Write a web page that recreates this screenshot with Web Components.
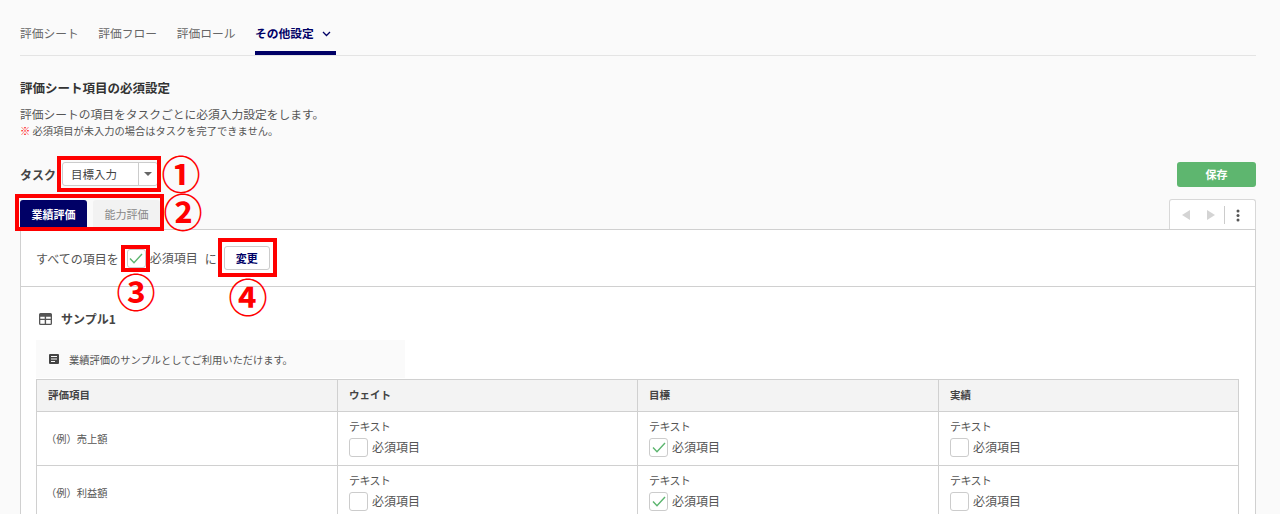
<!DOCTYPE html>
<html lang="ja">
<head>
<meta charset="utf-8">
<title>評価シート項目の必須設定</title>
<style>
  html, body { margin: 0; height: 514px; overflow: hidden; background: #fafafa; }
  body { font-family: "Noto Sans CJK JP", "Liberation Sans", sans-serif; color: #555; font-size: 12px; }
</style>
</head>
<body>
<settings-page></settings-page>

<script>
const CHECK_ICON = /*html*/`<svg width="14" height="11" viewBox="0 0 14 11"><path fill="none" stroke="#5cb56f" stroke-width="1.4" d="M1 5.500l4 4.300L13 1"></path></svg>`;

class TopNav extends HTMLElement {
    constructor() {
        super();
        const shadow = this.attachShadow({ mode: 'open' });
        shadow.innerHTML = /*html*/`
        <style>
            :host { display: flex; gap: 19.600px; height: 55px; margin: 0 24px 0 20px; border-bottom: 1px solid #e4e4e4; box-sizing: content-box; font-size: 11.750px; }
            a { display: block; padding-top: 24px; line-height: 18px; color: #666; }
            .active { color: #000066; font-weight: 700; border-bottom: 4px solid #000066; height: 27px; width: 81px; display: flex; align-items: flex-start; gap: 8px; }
            svg { margin-top: 7px; }
        </style>
        <a>評価シート</a>
        <a>評価フロー</a>
        <a>評価ロール</a>
        <a class="active">その他設定
            <svg width="9" height="6" viewBox="0 0 9 6"><path fill="none" stroke="#000066" stroke-width="1.3" d="M1 1l3.5 3.5L8 1"></path></svg>
        </a>`;
    }
}

class RequiredCheck extends HTMLElement {
    static get observedAttributes() { return ['checked']; }
    constructor() {
        super();
        const shadow = this.attachShadow({ mode: 'open' });
        shadow.innerHTML = /*html*/`
        <style>
            :host { display: inline-flex; align-items: center; gap: 4px; color: #555; line-height: 18px; }
            .box { width: 17px; height: 17px; border: 1px solid #ccc; border-radius: 3px; background: #fff; display: flex; align-items: center; justify-content: center; }
            .label { margin-top: var(--label-shift, 0); }
        </style>
        <span class="box"></span><span class="label"><slot>必須項目</slot></span>`;
    }
    attributeChangedCallback(name, oldValue, value) {
        this.shadowRoot.querySelector('.box').innerHTML = value === null ? '' : CHECK_ICON;
    }
}

class SheetCell extends HTMLElement {
    constructor() {
        super();
        const shadow = this.attachShadow({ mode: 'open' });
        shadow.innerHTML = /*html*/`
        <style>
            :host { display: flex; flex-direction: column; align-items: flex-start; gap: 4px; padding: 6px 11px 0; border-left: 1px solid #d0d0d0; --label-shift: -2px; }
            div { line-height: 16px; color: #555; font-size: 11px; letter-spacing: -0.6px; }
        </style>
        <div>テキスト</div>
        <required-check></required-check>`;
        if (this.hasAttribute('checked')) {
            shadow.querySelector('required-check').setAttribute('checked', '');
        }
    }
}

class SheetTable extends HTMLElement {
    constructor() {
        super();
        const shadow = this.attachShadow({ mode: 'open' });
        const row = (name) => /*html*/`
            <div class="row">
                <div class="name">（例）${name}</div>
                <sheet-cell></sheet-cell>
                <sheet-cell checked></sheet-cell>
                <sheet-cell></sheet-cell>
            </div>`;
        shadow.innerHTML = /*html*/`
        <style>
            :host { display: block; margin: 0 16px 0 15px; border: 1px solid #d0d0d0; border-width: 1px 1px 0 1px; }
            .row { display: grid; grid-template-columns: 300px 300px 301px 1fr; height: 53px; border-bottom: 1px solid #d0d0d0; background: #fff; }
            .head { height: 31px; background: #f3f3f3; font-size: 10.500px; font-weight: 700; color: #444; }
            .head div { padding: 0 11px; line-height: 30px; border-left: 1px solid #d0d0d0; }
            .head div:first-child { border-left: 0; }
            .name { font-size: 10.250px; padding: 0 0 0 9px; line-height: 53px; color: #555; }
        </style>
        <div class="row head">
            <div>評価項目</div><div>ウェイト</div><div>目標</div><div>実績</div>
        </div>
        ${row('売上額')}
        ${row('利益額')}`;
    }
}

class SheetPanel extends HTMLElement {
    constructor() {
        super();
        const shadow = this.attachShadow({ mode: 'open' });
        shadow.innerHTML = /*html*/`
        <style>
            :host { display: block; margin: 0 24px 0 20px; border: 1px solid #d0d0d0; background: #fff; height: 300px; overflow: hidden; }
            .bulk { display: flex; align-items: center; height: 56px; padding-left: 15px; border-bottom: 1px solid #d0d0d0; color: #555; }
            .bulk .to { margin-left: 7px; }
            .bulk required-check { margin-left: 8px; }
            .change { margin-left: 7px; width: 46px; height: 24px; box-sizing: border-box; border: 1px solid #ccc; border-radius: 3px; background: #fff; color: #000066; font: 700 11px "Noto Sans CJK JP", sans-serif; padding: 0; }
            .title { display: flex; align-items: center; gap: 9px; margin: 23px 0 0 18px; font-weight: 700; color: #444; line-height: 18px; }
            .desc { display: flex; align-items: center; gap: 10px; width: 369px; height: 38px; margin: 12px 0 1px 15px; padding-left: 13px; box-sizing: border-box; background: #fafafa; font-size: 10.250px; color: #555; }
        </style>
        <div class="bulk">すべての項目を<required-check checked></required-check><span class="to">に</span><button class="change">変更</button></div>
        <div class="title">
            <svg width="13" height="12" viewBox="0 0 13 12"><path fill="#555" fill-rule="evenodd" d="M1.500 0h10A1.500 1.500 0 0 1 13 1.500v9a1.500 1.500 0 0 1-1.500 1.500h-10A1.500 1.500 0 0 1 0 10.500v-9A1.500 1.500 0 0 1 1.500 0zM1.300 3.800v2h4.400v-2zM7.100 3.800v2h4.600v-2zM1.300 7.100v3.600h4.400V7.100zM7.100 7.100v3.600h4.600V7.100z"></path></svg>
            サンプル1
        </div>
        <div class="desc">
            <svg width="10" height="10" viewBox="0 0 10 10"><path fill="#444" fill-rule="evenodd" d="M1 0h8a1 1 0 0 1 1 1v8a1 1 0 0 1-1 1H1a1 1 0 0 1-1-1V1a1 1 0 0 1 1-1zM2 2v1h6V2zM2 4.500v1h6v-1zM2 7v1h4V7z"></path></svg>
            業績評価のサンプルとしてご利用いただけます。
        </div>
        <sheet-table></sheet-table>`;
    }
}

class RedMark extends HTMLElement {
    constructor() {
        super();
        const shadow = this.attachShadow({ mode: 'open' });
        shadow.innerHTML = /*html*/`
        <style>
            :host { position: absolute; box-sizing: border-box; border: 4px solid #f00; }
        </style>`;
    }
}

class RedNumber extends HTMLElement {
    constructor() {
        super();
        const shadow = this.attachShadow({ mode: 'open' });
        shadow.innerHTML = /*html*/`
        <style>
            :host { position: absolute; width: 40px; height: 36px; display: flex; align-items: center; justify-content: center; color: #f00; font: 700 39px/36px "Noto Sans CJK JP", sans-serif; }
        </style>
        <slot></slot>`;
    }
}

class SettingsPage extends HTMLElement {
    constructor() {
        super();
        const shadow = this.attachShadow({ mode: 'open' });
        shadow.innerHTML = /*html*/`
        <style>
            :host { display: block; position: relative; height: 514px; overflow: hidden; }
            h2 { margin: 23px 0 0 20px; font-size: 12.500px; line-height: 18px; color: #333; }
            p { margin: 8px 0 0 20px; font-size: 11.750px; line-height: 18px; color: #555; }
            p.note { margin-top: 0; font-size: 10.250px; line-height: 16px; }
            p.note b { color: #f00; font-weight: 400; }
            .task { display: flex; align-items: center; height: 26px; margin: 22px 24px 0 20px; }
            .task label { font-weight: 700; color: #444; margin-right: 6px; }
            .select { display: flex; width: 96px; height: 24px; box-sizing: border-box; border: 1px solid #ccc; border-radius: 3px; background: #fff; font-size: 11.500px; line-height: 22px; color: #444; }
            .select span { flex: 1; padding-left: 8px; border-right: 1px solid #ccc; }
            .select i { width: 18px; display: flex; align-items: center; justify-content: center; }
            .select i::after { content: ""; border: 4px solid transparent; border-top-color: #666; border-bottom: 0; }
            .save { margin-left: auto; width: 79px; height: 25px; border: 0; border-radius: 3px; background: #5eb66f; color: #fff; font: 700 11px "Noto Sans CJK JP", sans-serif; padding: 0; }
            .tabs { display: flex; align-items: flex-end; margin: 12px 24px 0 20px; height: 30px; }
            .tab { width: 67px; height: 28px; box-sizing: border-box; margin-bottom: 1px; border-radius: 3px 3px 0 0; text-align: center; font-size: 11px; line-height: 28px; }
            .tab.on { background: #000066; color: #fff; font-weight: 700; }
            .tab.off { margin-left: 6px; background: #f2f2f2; color: #888; }
            .pager { display: flex; align-items: center; margin-left: auto; width: 87px; height: 31px; box-sizing: border-box; border: 1px solid #d8d8d8; border-bottom: 0; border-radius: 3px 3px 0 0; background: #fff; margin-bottom: -1px; position: relative; }
            .pager .l { margin-left: 12px; }
            .pager .r { margin-left: 17px; }
            .pager .sep { width: 1px; height: 18px; background: #ccc; margin-left: 9px; }
            .pager .dots { margin-left: 11px; }
            sheet-panel { position: relative; }
        </style>
        <top-nav></top-nav>
        <h2>評価シート項目の必須設定</h2>
        <p>評価シートの項目をタスクごとに必須入力設定をします。</p>
        <p class="note"><b>※</b> 必須項目が未入力の場合はタスクを完了できません。</p>
        <div class="task">
            <label>タスク</label>
            <div class="select"><span>目標入力</span><i></i></div>
            <button class="save">保存</button>
        </div>
        <div class="tabs">
            <div class="tab on">業績評価</div>
            <div class="tab off">能力評価</div>
            <div class="pager">
                <svg class="l" width="8" height="10" viewBox="0 0 8 10"><path fill="#d4d4d4" d="M8 0v10L0 5z"></path></svg>
                <svg class="r" width="8" height="10" viewBox="0 0 8 10"><path fill="#d4d4d4" d="M0 0v10l8-5z"></path></svg>
                <span class="sep"></span>
                <svg class="dots" width="4" height="13" viewBox="0 0 4 13"><circle cx="2" cy="2" r="1.500" fill="#555"></circle><circle cx="2" cy="6.500" r="1.500" fill="#555"></circle><circle cx="2" cy="11" r="1.500" fill="#555"></circle></svg>
            </div>
        </div>
        <sheet-panel></sheet-panel>

        <red-mark style="left:57px;top:156px;width:104px;height:36px"></red-mark>
        <red-mark style="left:15px;top:194px;width:149px;height:37px"></red-mark>
        <red-mark style="left:121px;top:245px;width:29px;height:27px"></red-mark>
        <red-mark style="left:218px;top:238px;width:59px;height:39px"></red-mark>
        <red-number style="left:161px;top:154px">①</red-number>
        <red-number style="left:163px;top:192px">②</red-number>
        <red-number style="left:116px;top:272px">③</red-number>
        <red-number style="left:228px;top:277px">④</red-number>`;
    }
}

customElements.define('top-nav', TopNav);
customElements.define('required-check', RequiredCheck);
customElements.define('sheet-cell', SheetCell);
customElements.define('sheet-table', SheetTable);
customElements.define('sheet-panel', SheetPanel);
customElements.define('red-mark', RedMark);
customElements.define('red-number', RedNumber);
customElements.define('settings-page', SettingsPage);
</script>
</body>
</html>
